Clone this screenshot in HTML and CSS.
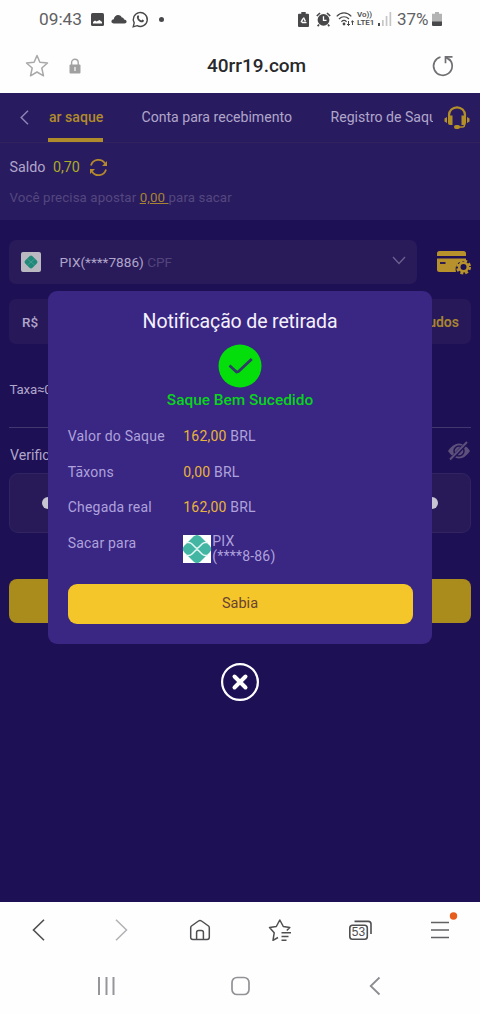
FILE: index.html
```
<!DOCTYPE html>
<html lang="pt-BR">
<head>
<meta charset="utf-8">
<meta name="viewport" content="width=device-width">
<title>Retirada</title>
<link rel="stylesheet" href="styles.css">
</head>
<body>
<header class="status">
  <span class="clock">09:43</span>
  <svg class="st-image" width="13" height="13" viewBox="0 0 13 13"><rect width="13" height="13" rx="1.500" fill="#48484a"/><path d="M2 10.500V9l2-1.500 1.500 1L8.500 7 11 9v1.500z" fill="#fff"/></svg>
  <svg class="st-cloud" width="16" height="10" viewBox="0 0 16 10"><path d="M3 9.500C-.5 9.500-.3 5.500 2.800 5.300 3.200 1 8.500-.8 10.800 3.500 12 3.200 13 4.300 13 5.500c3.600.3 3.300 4 .3 4z" fill="#48484a"/></svg>
  <svg class="st-chat" width="17" height="17" viewBox="0 0 17 17"><path d="M1.200 15.800l1-3.900a7 7 0 1 1 2.900 2.800z" fill="none" stroke="#48484a" stroke-width="1.400"/><path d="M5.200 5c.8-1.200 1.500-.8 2 .9l-.6 1c.7 1.300 1.500 2 2.800 2.600l1-.9c1.600.6 2.100 1.200 1 2.200-1.500 1.200-4 .1-5.400-1.600C5 7.700 4.500 6.200 5.200 5z" fill="#48484a"/></svg>
  <i class="st-dot"></i>
  <svg class="st-saver" width="11" height="15" viewBox="0 0 11 15"><path d="M3.300 0h4.400v1.700H10q1 0 1 1V14q0 1-1 1H1q-1 0-1-1V2.700q0-1 1-1h2.300z" fill="#48484a"/><path d="M5.500 5.500L8 10.500H3z" fill="none" stroke="#fff" stroke-width="1.400" stroke-linejoin="round" stroke-dasharray="4.200 1.200"/></svg>
  <svg class="st-alarm" width="15" height="15" viewBox="0 0 15 15"><circle cx="7.500" cy="7.800" r="5.900" fill="#48484a"/><path d="M.8 4L4 1M14.200 4L11 1M3 12.500l-1.300 1.800M12 12.500l1.300 1.800" stroke="#48484a" stroke-width="1.700"/><path d="M7.500 4.300V8.300h3" stroke="#fff" stroke-width="1.300" fill="none"/></svg>
  <svg class="st-wifi" width="19" height="15" viewBox="0 0 19 15"><g fill="none" stroke="#48484a" stroke-width="1.200"><path d="M.7 4.300C5-.2 11-.2 15.300 4.300M3 7c3-3 7-3 10 0M5.400 9.700c1.700-1.600 3.500-1.600 5.200 0"/><path d="M12.500 9v4.500M11 12l1.500 1.500 1.500-1.500M16.500 13V8.800M15.100 10.200l1.400-1.400 1.400 1.400" stroke-width="1"/></g><circle cx="8" cy="12" r="1.400" fill="#48484a"/></svg>
  <span class="lte"><b>Vo))</b><b>LTE1</b></span>
  <svg class="st-signal" width="14" height="14" viewBox="0 0 14 14"><path d="M0 11h2v3H0z" fill="#48484a"/><path d="M4 8h1.700v6H4zM7.700 4h1.700v10H7.700zM11.500 0h1.700v14h-1.700z" fill="#c6c6c6"/></svg>
  <span class="pct">37%</span>
  <svg class="st-batt" width="10" height="14" viewBox="0 0 10 14"><path d="M3 0h4v1.700h3V10H0V1.700h3z" fill="#b3b3b3"/><path d="M0 9.500h10V13q0 1-1 1H1q-1 0-1-1z" fill="#48484a"/></svg>
</header>

<div class="urlbar">
  <svg class="star" width="24" height="24" viewBox="0 0 24 24"><path d="M12 1.500l2.900 6.700 7.600.8-5.700 5 1.700 7.800L12 18l-6.500 3.800 1.700-7.800L1.500 9l7.600-.8z" fill="none" stroke="#a9a9a9" stroke-width="1.500" stroke-linejoin="round"/></svg>
  <svg class="lock" width="12" height="16" viewBox="0 0 12 16"><path d="M2.600 7V4.500a3.300 3.300 0 0 1 6.600 0V7" fill="none" stroke="#a5a5a5" stroke-width="1.400"/><rect x=".5" y="6.500" width="11" height="9" rx="1" fill="#a0a0a0"/><path d="M6 9v4" stroke="#eee" stroke-width="1.400"/></svg>
  <span class="host">40rr19.com</span>
  <svg class="reload" width="22" height="22" viewBox="0 0 22 22"><path d="M8.500 2A9.300 9.300 0 1 0 17 4" fill="none" stroke="#707074" stroke-width="1.700"/><path d="M20.500 1.800h-7v6.500M13.700 2l4.500 3.500" fill="none" stroke="#707074" stroke-width="1.700"/></svg>
</div>

<main class="page">
  <section class="top">
    <nav class="tabs">
      <svg class="back" width="9" height="15" viewBox="0 0 9 15"><path d="M8 .8L1.200 7.500 8 14.200" fill="none" stroke="#8d83b4" stroke-width="1.500"/></svg>
      <span class="tab active">ar saque</span>
      <span class="tab tab-account">Conta para recebimento</span>
      <span class="tab tab-log">Registro de Saque</span>
      <svg class="headset" width="26" height="24" viewBox="0 0 26 24"><path d="M5 10V9a8 7.700 0 0 1 16 0v1" fill="none" stroke="#b38f28" stroke-width="2.200"/><path d="M4 9.500h4.500V19H6q-2 0-2-2zM22 9.500h-4.500V19H20q2 0 2-2zM.5 12.500L3 11v6L.5 15.500zM25.500 12.500L23 11v6l2.500-1.500z" fill="#b38f28"/><path d="M20.500 18v1q0 2-2 2H15" fill="none" stroke="#b38f28" stroke-width="1.500"/><rect x="10" y="19" width="6" height="4" rx="2" fill="#b38f28"/></svg>
    </nav>
    <div class="balance"><span class="saldo">Saldo</span><span class="amount">0,70</span>
      <svg width="19" height="19" viewBox="0 0 19 19"><path d="M2 7.500A7.700 7.700 0 0 1 16 5.500M17 11.500A7.700 7.700 0 0 1 3 13.500" fill="none" stroke="#b48a2c" stroke-width="1.800"/><path d="M18 3v5h-5zM1 16v-5h5z" fill="#b48a2c"/></svg>
    </div>
    <p class="hint">Você precisa apostar <u>0,00 </u>para sacar</p>
  </section>

  <div class="method">
    <div class="select">
      <svg width="20" height="20" viewBox="0 0 20 20"><rect width="20" height="20" rx="2" fill="#bab9c1"/><path d="M8.500 4.200q1.500-1.500 3 0l4.300 4.300q1.500 1.500 0 3l-4.300 4.300q-1.500 1.500-3 0L4.200 11.500q-1.500-1.500 0-3z" fill="#21897a"/><path d="M6.500 7L13.500 13M13.500 7L6.500 13" stroke="#4f9f94" stroke-width=".8"/></svg>
      <span class="pix">PIX(****7886) <em>CPF</em></span>
      <svg class="chev" width="14" height="9" viewBox="0 0 14 9"><path d="M1 1l6 6.500L13 1" fill="none" stroke="#6d618f" stroke-width="1.300"/></svg>
    </div>
    <svg class="card" width="35" height="25" viewBox="0 0 35 25"><path d="M1 6V3.500Q1 1 3.500 1h24Q30 1 30 3.500V6zM1 8.500h29v3c-6-2-12 3-10 10.500H3.500Q1 22 1 19.500z" fill="#b7922c"/><path d="M4 13h5.500" stroke="#1e1055" stroke-width="1.800"/><circle cx="27.500" cy="17" r="6.200" fill="none" stroke="#b7922c" stroke-width="2.600" stroke-dasharray="2.900 1.970"/><circle cx="27.500" cy="17" r="4.300" fill="#1e1055" stroke="#b7922c" stroke-width="2.600"/></svg>
  </div>

  <div class="value"><span>R$</span><b>Tudos</b></div>
  <p class="fee">Taxa≈0,00</p>
  <div class="verify"><span>Verificação</span>
    <svg width="24" height="20" viewBox="0 0 24 20"><path d="M1 10Q6 2.500 12 2.500T23 10Q18 17.500 12 17.500T1 10z" fill="#5d517c"/><circle cx="12" cy="10" r="5" fill="none" stroke="#211356" stroke-width="1.500"/><path d="M3.500 19L20 1.500" stroke="#211356" stroke-width="4"/><path d="M3 18.500L20 1" stroke="#5d517c" stroke-width="1.900"/></svg>
  </div>
  <div class="pin"><i></i><i></i><i></i><i></i><i></i><i></i></div>
  <div class="confirm"></div>

  <div class="overlay">
    <section class="modal">
      <h1>Notificação de retirada</h1>
      <svg class="ok" width="44" height="44" viewBox="0 0 44 44"><circle cx="22" cy="22" r="21.500" fill="#04df0b"/><path d="M11.500 21.500l7 6.500 2-.5L33.800 15" fill="none" stroke="#333b68" stroke-width="2.800"/></svg>
      <p class="success">Saque Bem Sucedido</p>
      <dl>
        <dt>Valor do Saque</dt><dd><b>162,00</b> BRL</dd>
        <dt>Tāxons</dt><dd><b>0,00</b> BRL</dd>
        <dt>Chegada real</dt><dd><b>162,00</b> BRL</dd>
        <dt>Sacar para</dt>
        <dd class="dest"><svg width="28" height="28" viewBox="0 0 28 28"><path d="M0 0h28v28H0z" fill="#fff"/><path d="M10.500 1.500Q14-1.500 17.500 1.500L26.500 10.500Q30 14 26.500 17.500L17.500 26.500Q14 29.500 10.500 26.500L1.500 17.500Q-2 14 1.500 10.500z" fill="#43b6a3"/><path d="M3 7.500h2.500q2 0 3.500 1.500l3.500 3.500q1.500 1.500 3 0L19 9q1.500-1.500 3.500-1.500H25M3 20.500h2.500q2 0 3.500-1.500l3.500-3.500q1.500-1.500 3 0L19 19q1.500 1.500 3.500 1.500H25" fill="none" stroke="#e5f7f5" stroke-width="1.500"/></svg><span>PIX<br>(****8-86)</span></dd>
      </dl>
      <button class="got-it">Sabia</button>
    </section>
    <svg class="close" width="40" height="40" viewBox="0 0 40 40"><circle cx="20" cy="20" r="17.900" fill="none" stroke="#fff" stroke-width="2.200"/><path d="M14.500 14.500l11 11M25.500 14.500L14.500 25.500" stroke="#fff" stroke-width="4" stroke-linecap="round"/></svg>
  </div>
</main>

<nav class="toolbar">
  <span><svg width="24" height="24" viewBox="0 0 24 24"><path d="M16 1.700L5.500 12 16 22.300" fill="none" stroke="#4f4f51" stroke-width="1.600"/></svg></span>
  <span><svg width="24" height="24" viewBox="0 0 24 24"><path d="M8 1.700L18.500 12 8 22.300" fill="none" stroke="#b2b1b4" stroke-width="1.500"/></svg></span>
  <span><svg width="24" height="24" viewBox="0 0 24 24"><path d="M2.700 9.700Q2.700 8.700 3.500 8l7-5q1.500-1 3 0l7 5q.8.700.8 1.700v9.500q0 2.200-2.200 2.200H4.900q-2.200 0-2.200-2.200zM8.600 21.400v-7q0-2 2-2h2.800q2 0 2 2v7" fill="none" stroke="#4f4f51" stroke-width="1.500"/></svg></span>
  <span><svg width="24" height="24" viewBox="0 0 24 24"><path d="M10 19.500L5 22.300l1.200-7.500L1.500 9.500l6.800-1 3.500-6.500 3.500 6.500 6.500 1-3 3" fill="none" stroke="#4f4f51" stroke-width="1.500" stroke-linejoin="round"/><path d="M13.500 14.700H23M13.500 18.500h7M13.500 22.300h5" stroke="#4f4f51" stroke-width="1.500"/></svg></span>
  <span><svg width="26" height="24" viewBox="0 0 26 24"><rect x="2.800" y="7.300" width="17.500" height="14" rx="2.700" fill="none" stroke="#4f4f51" stroke-width="1.600"/><path d="M7.500 3.400h13.800q2.700 0 2.700 2.700V16" fill="none" stroke="#4f4f51" stroke-width="1.600"/><text x="11.500" y="18.300" class="count">53</text></svg></span>
  <span><svg width="28" height="36" viewBox="0 0 28 36"><path d="M5 10.500h18M5 18h18M5 25.500h18" stroke="#626264" stroke-width="1.500"/><circle cx="27.500" cy="4" r="3.700" fill="#e65d1e"/></svg></span>
</nav>
<footer class="sysnav">
  <svg width="20" height="20" viewBox="0 0 20 20"><path d="M3 1v18M10.500 1v18M17.500 1v18" stroke="#96959a" stroke-width="2"/></svg>
  <svg width="20" height="20" viewBox="0 0 20 20"><rect x="1" y="1.500" width="17" height="17" rx="5" fill="none" stroke="#929196" stroke-width="1.700"/></svg>
  <svg width="20" height="20" viewBox="0 0 20 20"><path d="M14.500 1.500L5.700 10l8.800 8.500" fill="none" stroke="#8d8c91" stroke-width="1.800"/></svg>
</footer>
</body>
</html>
```
FILE: styles.css
```
* { box-sizing: border-box; }
body { margin: 0; width: 480px; height: 1014px; overflow: hidden; background: #fefefe; font: 14px/20px Roboto, sans-serif; color: #b0a6ca; }
svg { display: block; flex: none; overflow: visible; }
p, h1, dl, dd { margin: 0; }
span, p, h1, dt, dd { white-space: nowrap; }

.status { display: flex; align-items: center; height: 38px; padding-left: 39px; color: #616163; }
.clock { width: 52px; font-size: 17.300px; }
.st-cloud { margin-left: 7px; }
.st-chat { margin-left: 5px; }
.st-dot { width: 5px; height: 5px; margin-left: 10px; border-radius: 50%; background: #48484a; }
.st-saver { margin-left: 134px; }
.st-alarm { margin-left: 7px; }
.st-wifi { margin-left: 5px; }
.lte { display: flex; flex-direction: column; width: 19px; margin-left: 2px; font-size: 8px; line-height: 8px; color: #505052; }
.lte b { font-weight: 600; }
.st-signal { margin-left: 2px; }
.pct { width: 35px; margin-left: 5px; font-size: 17px; }

.urlbar { display: flex; align-items: center; height: 55px; padding: 0 26px 0 25px; }
.lock { margin: 0 0 0 20px; }
.host { flex: 1; padding-left: 126px; font-size: 19px; font-weight: 500; color: #29292b; }

.page { position: relative; height: 809px; overflow: hidden; background: #1e1055; }
.top { height: 127px; background: #291b60; }
.tabs { display: flex; align-items: center; height: 50px; padding-left: 20px; border-bottom: 1px solid #30225f; }
.tab { height: 49px; font-size: 14.100px; line-height: 49px; }
.active { width: 55px; margin-left: 19px; padding-left: 1px; border-bottom: 4px solid #b08b2c; font-weight: 500; color: #b08b2c; }
.tab-account { margin-left: 38.500px; }
.tab-log { width: 102.500px; margin-left: auto; overflow: hidden; }
.headset { margin: 0 10px 0 11px; }
.balance { display: flex; align-items: center; height: 48px; padding-left: 9.500px; font-size: 14.300px; }
.amount { margin: 0 9px 0 7.500px; color: #acab27; }
.hint { padding-left: 9.500px; font-size: 13.300px; line-height: 14px; letter-spacing: .1px; color: #54477f; }
.hint u { color: #a88432; white-space: pre; }

.method { display: flex; align-items: center; padding: 20px 9px 0; }
.select { display: flex; align-items: center; width: 409px; height: 44px; padding: 0 11px 0 12px; border-radius: 7px; background: #291b5a; }
.pix { flex: 1; padding-left: 18.500px; font-size: 13.600px; }
.pix em { font-style: normal; color: #53457a; }
.chev { margin-bottom: 3px; }
.card { margin-left: 19px; }
.value { display: flex; align-items: center; justify-content: space-between; height: 45px; margin: 15px 9px 0; padding: 0 12px 0 13px; border-radius: 7px; background: #271959; font-weight: 500; }
.value span { font-size: 13.500px; }
.value b { font-weight: 600; color: #a88432; }
.fee { height: 83px; padding: 36px 9px 0 9.500px; font-size: 13.300px; letter-spacing: -.2px; }
.verify { display: flex; align-items: center; justify-content: space-between; height: 46px; margin: 0 9px; padding: 9px 0 0 1px; border-top: 1px solid #43376f; font-size: 14.200px; }
.verify svg { margin-top: -9px; }
.pin { display: flex; align-items: center; justify-content: space-around; height: 60px; margin: 0 9px; border: 1px solid #312461; border-radius: 9px; background: #281a59; }
.pin i { width: 12px; height: 12px; border-radius: 50%; background: #c8c5d2; }
.confirm { height: 44px; margin: 46px 9px 0; border-radius: 8px; background: #a98c1c; }

.overlay { position: absolute; inset: 0; display: flex; flex-direction: column; align-items: center; padding-top: 198px; }
.modal { display: flex; flex-direction: column; align-items: center; width: 384.500px; height: 353px; padding: 19px 20px 0; border-radius: 9px; background: #3a2683; }
h1 { font-size: 19.500px; font-weight: 400; line-height: 24px; letter-spacing: -.13px; color: #f4f1fc; }
.ok { margin-top: 10px; }
.success { margin-top: 2px; font-size: 15.400px; font-weight: 500; color: #08d51b; }
dl { display: grid; grid-template-columns: 115.500px 1fr; grid-template-rows: 35.700px 35.700px 35.700px 50px; align-self: stretch; padding-top: 16px; line-height: 20px; letter-spacing: .2px; color: #aea2dc; }
dd b { font-weight: 400; color: #e8b43c; }
.dest { display: flex; }
.dest svg { margin-top: 1.500px; }
.dest span { padding: 1px 0 0 1px; line-height: 15px; }
.got-it { width: 345px; height: 40px; margin-top: auto; margin-bottom: 20.500px; border: 0; border-radius: 9px; background: #f5c629; font: 14.500px Roboto, sans-serif; color: #694332; }
.close { margin-top: 18px; }

.toolbar { display: flex; align-items: center; height: 56px; }
.toolbar span { display: flex; flex: 1; justify-content: center; }
.count { font: 500 12px "Liberation Sans", sans-serif; text-anchor: middle; fill: #4f4f51; }
.sysnav { display: flex; align-items: center; justify-content: space-between; height: 56px; padding: 0 95px 0 96px; }
```
